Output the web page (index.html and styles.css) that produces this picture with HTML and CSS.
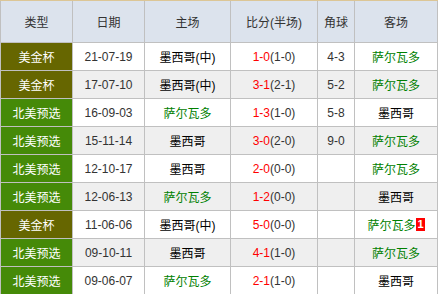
FILE: index.html
```html
<!DOCTYPE html>
<html>
<head>
<meta charset="utf-8">
<link rel="stylesheet" href="styles.css">
</head>
<body>
<div class="grid">
  <div class="hd">类型</div><div class="hd">日期</div><div class="hd">主场</div><div class="hd">比分(半场)</div><div class="hd">角球</div><div class="hd">客场</div>

  <div class="type gold">美金杯</div><div class="c date">21-07-19</div><div class="c blk">墨西哥(中)</div><div class="c"><span class="red">1-0</span>(1-0)</div><div class="c">4-3</div><div class="c grn">萨尔瓦多</div>

  <div class="type gold">美金杯</div><div class="c alt date">17-07-10</div><div class="c alt blk">墨西哥(中)</div><div class="c alt"><span class="red">3-1</span>(2-1)</div><div class="c alt">5-2</div><div class="c alt grn">萨尔瓦多</div>

  <div class="type green">北美预选</div><div class="c date">16-09-03</div><div class="c grn">萨尔瓦多</div><div class="c"><span class="red">1-3</span>(1-0)</div><div class="c">5-8</div><div class="c blk">墨西哥</div>

  <div class="type green">北美预选</div><div class="c alt date">15-11-14</div><div class="c alt blk">墨西哥</div><div class="c alt"><span class="red">3-0</span>(2-0)</div><div class="c alt">9-0</div><div class="c alt grn">萨尔瓦多</div>

  <div class="type green">北美预选</div><div class="c date">12-10-17</div><div class="c blk">墨西哥</div><div class="c"><span class="red">2-0</span>(0-0)</div><div class="c"></div><div class="c grn">萨尔瓦多</div>

  <div class="type green">北美预选</div><div class="c alt date">12-06-13</div><div class="c alt grn">萨尔瓦多</div><div class="c alt"><span class="red">1-2</span>(0-0)</div><div class="c alt"></div><div class="c alt blk">墨西哥</div>

  <div class="type gold">美金杯</div><div class="c date">11-06-06</div><div class="c blk">墨西哥(中)</div><div class="c"><span class="red">5-0</span>(0-0)</div><div class="c"></div><div class="c grn">萨尔瓦多<span class="badge">1</span></div>

  <div class="type green">北美预选</div><div class="c alt date">09-10-11</div><div class="c alt blk">墨西哥</div><div class="c alt"><span class="red">4-1</span>(1-0)</div><div class="c alt"></div><div class="c alt grn">萨尔瓦多</div>

  <div class="type green">北美预选</div><div class="c date">09-06-07</div><div class="c grn">萨尔瓦多</div><div class="c"><span class="red">2-1</span>(1-0)</div><div class="c"></div><div class="c blk">墨西哥</div>
</div>
</body>
</html>
```

FILE: styles.css
```css
html, body {
  margin: 0;
  padding: 0;
  background: #fff;
}
body {
  font-family: "Liberation Sans", "Noto Sans CJK SC", sans-serif;
  font-size: 12px;
  color: #333;
}
.grid {
  display: grid;
  grid-template-columns: 71px 71px 85px 86px 36px 82px;
  grid-template-rows: 41px;
  grid-auto-rows: 27px;
  gap: 1px;
  width: 436px;
  background: #c0c0c0;
  border-top: 1px solid #dcc696;
  padding: 0 1px 1px 1px;
}
.grid > div {
  display: flex;
  align-items: center;
  justify-content: center;
  white-space: nowrap;
}
.hd {
  background: #dce3ed;
  color: #333;
}
.c {
  background: #fff;
  color: #333;
}
.c.alt {
  background: #efefef;
}
.type {
  color: #fff;
}
.gold {
  background: #666600;
}
.green {
  background: #458a08;
}
.date {
  color: #333;
}
.blk {
  color: #000;
}
.grn {
  color: #008000;
}
.red {
  color: #f00;
}
.badge {
  display: inline-block;
  background: #f00;
  color: #fff;
  font-weight: bold;
  font-size: 11px;
  line-height: 13px;
  padding: 0 1px;
  margin-left: 1px;
}
```
